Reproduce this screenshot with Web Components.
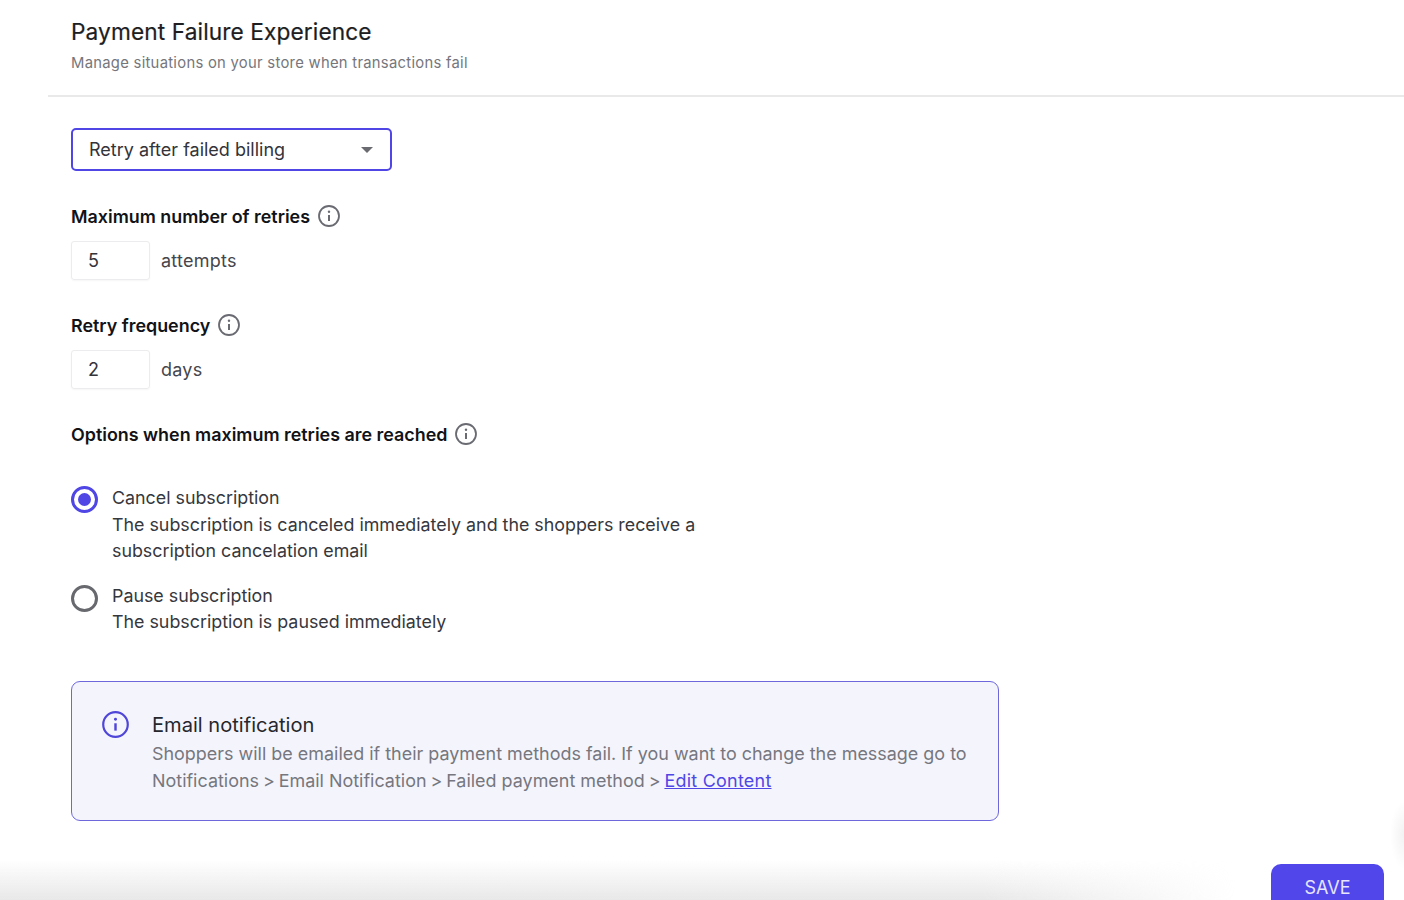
<!DOCTYPE html>
<html lang="en">
<head>
<meta charset="utf-8">
<title>Payment Failure Experience</title>
<style>
    html, body {
        margin: 0;
        height: 900px;
        overflow: hidden;
        background: #fff;
        font-family: Inter, "Liberation Sans", sans-serif;
        color: #1f2024;
    }
</style>
</head>
<body>
<pf-page>
    <pf-header slot="header" title="Payment Failure Experience" subtitle="Manage situations on your store when transactions fail"></pf-header>
    <pf-select value="Retry after failed billing"></pf-select>
    <pf-number label="Maximum number of retries" value="5" unit="attempts"></pf-number>
    <pf-number label="Retry frequency" value="2" unit="days"></pf-number>
    <pf-label>Options when maximum retries are reached</pf-label>
    <pf-radio-group>
        <pf-radio checked title-text="Cancel subscription">The subscription is canceled immediately and the shoppers receive a subscription cancelation email</pf-radio>
        <pf-radio title-text="Pause subscription">The subscription is paused immediately</pf-radio>
    </pf-radio-group>
    <pf-notice heading="Email notification">Shoppers will be emailed if their payment methods fail. If you want to change the message go to<br>Notifications <span>&gt;</span> Email Notification <span>&gt;</span> Failed payment method <span>&gt;</span> <a href="#">Edit Content</a></pf-notice>
    <pf-save-bar slot="footer"></pf-save-bar>
</pf-page>

<script>
const INFO_ICON = `
    <svg width="22" height="22" viewBox="0 0 22 22" fill="none" stroke="currentColor">
        <circle cx="11" cy="11" r="10" stroke-width="1.8"/>
        <path d="M11 10v6" stroke-width="2"/>
        <circle cx="11" cy="6.8" r="1.2" fill="currentColor" stroke="none"/>
    </svg>`;

/** Defines a custom element whose shadow root is built once from a html string. */
function define(name, render) {
    customElements.define(name, class extends HTMLElement {
        connectedCallback() {
            if (this.shadowRoot) return;
            this.attachShadow({mode: "open"});
            this.shadowRoot.innerHTML = render(this);
        }
    });
}

define("pf-page", () => `
    <style>
        :host { display: block; position: relative; height: 900px; overflow: hidden; }
        main { display: flex; flex-direction: column; padding: 31px 0 0 71px; }
    </style>
    <slot name="header"></slot>
    <main><slot></slot></main>
    <slot name="footer"></slot>
`);

define("pf-header", (el) => `
    <style>
        :host { display: block; margin-left: 48px; padding: 17px 0 24px 23px; border-bottom: 2px solid #e9e9ea; height: 54px; }
        h1 { margin: 0; font-size: 22.7px; line-height: 30px; font-weight: 400; letter-spacing: 0.1px; color: #1d1e22; -webkit-text-stroke: 0.2px #1d1e22; }
        p { margin: 6px 0 0; font-size: 14.8px; line-height: 20px; color: #75767c; letter-spacing: 0.28px; }
    </style>
    <h1>${el.getAttribute("title")}</h1>
    <p>${el.getAttribute("subtitle")}</p>
`);

define("pf-select", (el) => `
    <style>
        :host { display: flex; align-items: center; justify-content: space-between; box-sizing: border-box; width: 321px; height: 43px; padding: 0 17px 0 16px; border: 2.5px solid #4f46e5; border-radius: 5px; font-size: 18px; color: #33343a; }
        i { width: 0; height: 0; border: 6.5px solid transparent; border-top: 6.5px solid #6a6b70; border-bottom: 0; }
    </style>
    <span>${el.getAttribute("value")}</span><i></i>
`);

define("pf-label", () => `
    <style>
        :host { display: flex; align-items: center; gap: 8px; height: 24px; font-size: 17.9px; font-weight: 600; color: #121317; margin-top: 33px; }
        span { display: inline-flex; color: #6a6b72; }
    </style>
    <slot></slot><span>${INFO_ICON}</span>
`);

define("pf-number", (el) => `
    <style>
        :host { display: block; }
        .row { display: flex; align-items: center; gap: 11px; margin-top: 13px; font-size: 18px; letter-spacing: 0.25px; color: #45464c; }
        .box { box-sizing: border-box; width: 79px; height: 39px; padding-left: 16px; display: flex; align-items: center; border: 1px solid #ececee; border-radius: 3px; color: #33343a; box-shadow: 0 1px 2px rgba(0,0,0,.04); }
        .box span { font-size: 18px; }
    </style>
    <pf-label>${el.getAttribute("label")}</pf-label>
    <div class="row"><div class="box"><span>${el.getAttribute("value")}</span></div><span>${el.getAttribute("unit")}</span></div>
`);

define("pf-radio-group", () => `
    <style>
        :host { display: flex; flex-direction: column; gap: 18px; margin-top: 39px; width: 640px; }
    </style>
    <slot></slot>
`);

define("pf-radio", (el) => `
    <style>
        :host { display: flex; gap: 14px; font-size: 17.83px; line-height: 26.5px; color: #36373d; }
        .dot { flex: none; box-sizing: border-box; width: 27px; height: 27px; margin-top: ${el.hasAttribute("checked") ? 1 : 2}px; border-radius: 50%; border: 3px solid ${el.hasAttribute("checked") ? "#4f46e5" : "#68696e"}; display: flex; align-items: center; justify-content: center; }
        .dot b { width: 13px; height: 13px; border-radius: 50%; background: #4f46e5; }
    </style>
    <div class="dot">${el.hasAttribute("checked") ? "<b></b>" : ""}</div>
    <div>${el.getAttribute("title-text")}<br><slot></slot></div>
`);

define("pf-notice", (el) => `
    <style>
        :host { display: flex; gap: 23px; box-sizing: border-box; width: 928px; height: 140px; margin-top: 45px; padding: 28px 20px 0 30px; border: 1.5px solid #6e67dc; border-radius: 9px; background: #f4f4fd; }
        span.icon { flex: none; display: flex; color: #4f46d8; margin-top: 1px; }
        svg { width: 27px; height: 27px; }
        h2 { margin: 0; font-size: 20.1px; line-height: 30px; font-weight: 400; color: #26272c; }
        p { margin: 0; font-size: 17.95px; line-height: 27px; color: #76777e; white-space: nowrap; }
        ::slotted(a) { color: #4f46e5; letter-spacing: 0.25px; }
        ::slotted(span) { margin: 0 -1.15px; }
    </style>
    <span class="icon">${INFO_ICON}</span>
    <div>
        <h2>${el.getAttribute("heading")}</h2>
        <p><slot></slot></p>
    </div>
`);

define("pf-save-bar", () => `
    <style>
        :host { display: block; position: absolute; left: 0; right: 0; bottom: 0; height: 100px; pointer-events: none; }
        .fade { position: absolute; left: 0; right: 0; bottom: 0; height: 40px; background: linear-gradient(to bottom, rgba(232,232,232,0), #e8e8e8); -webkit-mask-image: linear-gradient(to right, #000 70%, transparent 88%); mask-image: linear-gradient(to right, #000 70%, transparent 88%); }
        .edge { position: absolute; right: 0; top: 0; width: 14px; height: 70px; background: radial-gradient(ellipse at right center, rgba(0,0,0,.05), transparent 70%); }
        button { position: absolute; left: 1271px; top: 64px; width: 113px; height: 50px; padding: 0 0 3px; border: 0; border-radius: 10px 10px 0 0; background: #5146ea; color: #e7e5ff; font: 400 18px Inter, "Liberation Sans", sans-serif; }
    </style>
    <div class="fade"></div>
    <div class="edge"></div>
    <button>SAVE</button>
`);
</script>
</body>
</html>
